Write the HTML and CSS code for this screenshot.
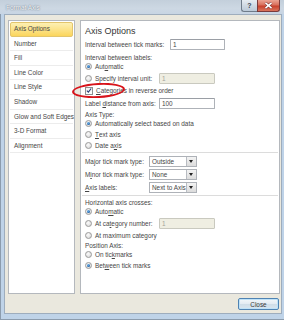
FILE: index.html
```html
<!DOCTYPE html>
<html>
<head>
  <meta charset="UTF-8">
  <title>Format Axis</title>
  <link rel="stylesheet" href="styles.css">
</head>
<body>
  <div class="window">
    <div class="titlebar">
      <span class="title">Format Axis</span>
      <div class="caption-btns">
        <span class="cap-btn help">?</span>
        <span class="cap-btn close">
          <svg width="9" height="7" viewBox="0 0 9 7">
            <path d="M1.5 0.8 L7.5 6.2 M7.5 0.8 L1.5 6.2" stroke="#6b2a2a" stroke-width="2.6"/>
            <path d="M1.5 0.8 L7.5 6.2 M7.5 0.8 L1.5 6.2" stroke="#fff" stroke-width="1.6"/>
          </svg>
        </span>
      </div>
    </div>

    <div class="client">
      <div class="panes">
        <!-- Category list -->
        <ul class="nav">
          <li class="selected">Axis Options</li>
          <li>Number</li>
          <li>Fill</li>
          <li>Line Color</li>
          <li>Line Style</li>
          <li>Shadow</li>
          <li>Glow and Soft Edges</li>
          <li>3-D Format</li>
          <li>Alignment</li>
        </ul>

        <!-- Axis options page -->
        <div class="options">
          <div class="heading">Axis Options</div>

          <div class="row field">
            <span class="lbl lbl-wide">Interval between tick marks:</span>
            <span class="textbox tb-short">1</span>
          </div>
          <div class="row group-label spaced">Interval between labels:</div>
          <div class="row"><span class="radio checked"></span>Aut<u>o</u>matic</div>
          <div class="row field">
            <span class="radio"></span>
            <span class="lbl lbl-radio">Specify interval unit:</span>
            <span class="textbox disabled">1</span>
          </div>
          <div class="row check-row">
            <span class="checkbox">
              <svg width="7" height="7" viewBox="0 0 7 7">
                <path d="M1 3.6 L2.8 5.4 L6 1.2" fill="none" stroke="#2c3f78" stroke-width="1.3"/>
              </svg>
            </span>
            <u>C</u>ategories in reverse order
            <span class="mark"></span>
          </div>
          <div class="row field">
            <span class="lbl lbl-mid">Label <u>d</u>istance from axis:</span>
            <span class="textbox">100</span>
          </div>

          <div class="row group-label">Axis Type:</div>
          <div class="row"><span class="radio checked"></span>Automatically select based on data</div>
          <div class="row"><span class="radio"></span><u>T</u>ext axis</div>
          <div class="row"><span class="radio"></span>Date a<u>x</u>is</div>

          <div class="sep"></div>

          <div class="row field">
            <span class="lbl lbl-select">Major tick mark type:</span>
            <span class="dropdown">Outside<span class="arrow"></span></span>
          </div>
          <div class="row field">
            <span class="lbl lbl-select">M<u>i</u>nor tick mark type:</span>
            <span class="dropdown">None<span class="arrow"></span></span>
          </div>
          <div class="row field">
            <span class="lbl lbl-select"><u>A</u>xis labels:</span>
            <span class="dropdown">Next to Axis<span class="arrow"></span></span>
          </div>

          <div class="sep"></div>

          <div class="row group-label">Horizontal axis crosses:</div>
          <div class="row"><span class="radio checked"></span>Auto<u>m</u>atic</div>
          <div class="row field">
            <span class="radio"></span>
            <span class="lbl lbl-radio">At ca<u>t</u>egory number:</span>
            <span class="textbox disabled">1</span>
          </div>
          <div class="row"><span class="radio"></span>At maximum category</div>

          <div class="row group-label">Position Axis:</div>
          <div class="row"><span class="radio"></span>On tic<u>k</u> marks</div>
          <div class="row"><span class="radio checked"></span>Bet<u>w</u>een tick marks</div>
        </div>
      </div>

      <div class="footer">
        <button class="btn">Close</button>
      </div>
    </div>
  </div>
</body>
</html>
```

FILE: styles.css
```css
:root {
  --frame: #bfd3e8;
  --client-bg: #eae8de;
  --text: #464646;
  --box-border: #aeb2b8;
  --panel-border: #b4b8bd;
}

body {
  margin: 0;
  width: 284px;
  height: 320px;
  overflow: hidden;
  font-family: 'Liberation Sans', Arial, sans-serif;
  font-size: 6.4px;
  color: var(--text);
  background-color: var(--frame);
}

u {
  text-decoration-thickness: 0.5px;
  text-underline-offset: 1px;
}

.window {
  height: 320px;
  box-sizing: border-box;
  box-shadow: inset 1px 0 0 #8c9cad, inset 0 -1px 0 #8c9cad;
}

/* Title bar */
.titlebar {
  height: 14px;
  display: flex;
  justify-content: space-between;
  align-items: flex-start;
  padding: 0 4px 0 6px;
  background: linear-gradient(180deg, #c3cfdb 0%, #cdd8e3 60%, #c7d5e4 100%);
}

.title {
  line-height: 15px;
  color: #f7f9fb;
  text-shadow: 0 0 1px #5e6b79, 0 0 2px #8f9cab;
}

.caption-btns {
  display: flex;
  height: 12px;
}

.cap-btn {
  display: flex;
  align-items: center;
  justify-content: center;
  box-sizing: border-box;
  height: 12px;
  border: 1px solid #6f7c8a;
  border-top: none;
}

.cap-btn.help {
  width: 16px;
  border-right: none;
  border-radius: 0 0 0 3px;
  background: linear-gradient(180deg, #e6ecf2 0%, #cfd9e3 50%, #bccad8 100%);
  color: #3b4653;
  font-weight: bold;
  font-size: 7px;
}

.cap-btn.close {
  width: 23px;
  border-radius: 0 0 3px 0;
  border-color: #7a3b3b;
  background: linear-gradient(180deg, #eba493 0%, #d9705c 45%, #c8412c 55%, #d9745c 100%);
}

/* Client area */
.client {
  width: 278px;
  height: 300px;
  box-sizing: border-box;
  margin-left: 4px;
  padding: 5px 1px 3px 3px;
  background-color: var(--client-bg);
  border: 1px solid #9eadbd;
}

.panes {
  display: flex;
  gap: 5px;
  height: 274px;
}

/* Left category list */
.nav {
  list-style: none;
  margin: 0;
  padding: 1px 1px 0 1px;
  width: 67px;
  box-sizing: border-box;
  background: #fff;
  border: 1px solid var(--panel-border);
}

.nav li {
  height: 14.6px;
  line-height: 14.6px;
  box-sizing: border-box;
  padding-left: 4px;
  border-bottom: 1px solid #ececec;
  white-space: nowrap;
}

.nav li.selected {
  padding-left: 3px;
  border: 1px solid #e3c56c;
  border-radius: 2px;
  background: linear-gradient(180deg, #fdf0b3 0%, #fce38a 50%, #fbd55c 100%);
  line-height: 12.6px;
}

/* Right options page */
.options {
  flex: 1;
  padding-top: 5px;
  background: #fff;
  border: 1px solid var(--panel-border);
}

.heading {
  height: 11px;
  line-height: 11px;
  padding-left: 4px;
  font-size: 9px;
  color: #353535;
}

.row {
  display: flex;
  align-items: center;
  height: 10px;
  margin-top: 1px;
  padding-left: 4px;
  white-space: nowrap;
}

.row.field {
  height: 12px;
}

.row.check-row {
  position: relative;
  height: 11px;
}

.row.group-label {
  height: 8px;
}

.row.group-label.spaced {
  margin-top: 3px;
}

.group-label + .row {
  margin-top: 0;
}

.lbl {
  flex: none;
}

.lbl-wide { width: 85px; }
.lbl-mid { width: 74px; }
.lbl-radio { width: 64px; }
.lbl-select { width: 64px; }

.sep {
  height: 1px;
  margin: 2px 1px;
  background: #dcdcdc;
}

/* Controls */
.radio {
  flex: none;
  width: 7px;
  height: 7px;
  margin-right: 3px;
  box-sizing: border-box;
  border: 1px solid #9a9a9a;
  border-radius: 50%;
  background: radial-gradient(circle at 40% 35%, #fbfbfb 0%, #e4e4e4 60%, #cfcfcf 100%);
  position: relative;
}

.radio.checked::after {
  content: "";
  position: absolute;
  left: 1px;
  top: 1px;
  width: 3px;
  height: 3px;
  border-radius: 50%;
  background: radial-gradient(circle at 40% 35%, #6fb6ec 0%, #1c5fa8 70%, #123f76 100%);
}

.checkbox {
  flex: none;
  display: flex;
  align-items: center;
  justify-content: center;
  width: 8px;
  height: 8px;
  margin-right: 3px;
  box-sizing: border-box;
  border: 1px solid #8e8f8f;
  background: linear-gradient(180deg, #f0f0f0, #fff);
}

/* Red hand-drawn circle around the checkbox */
.mark {
  position: absolute;
  left: -9px;
  top: -2px;
  width: 53px;
  height: 15px;
  box-sizing: border-box;
  border: 2px solid #d8141b;
  border-radius: 50%;
  transform: rotate(-3deg);
}

.textbox {
  flex: none;
  width: 56px;
  height: 11px;
  line-height: 9px;
  box-sizing: border-box;
  padding-left: 2px;
  border: 1px solid var(--box-border);
  border-top-color: #9a9ea5;
  border-radius: 1px;
  background: #fff;
}

.textbox.tb-short {
  width: 55px;
}

.textbox.disabled {
  background: #efeee2;
  border-color: #c9c9bf;
  color: #a3a39a;
}

.dropdown {
  flex: none;
  display: flex;
  align-items: center;
  justify-content: space-between;
  width: 48px;
  height: 11px;
  box-sizing: border-box;
  padding-left: 2px;
  border: 1px solid var(--box-border);
  background: #fff;
}

.dropdown .arrow {
  width: 10px;
  height: 9px;
  box-sizing: border-box;
  border-left: 1px solid #b8bcc2;
  background: linear-gradient(180deg, #f3f3f3 0%, #dcdcdc 100%);
  position: relative;
}

.dropdown .arrow::after {
  content: "";
  position: absolute;
  left: 2px;
  top: 3px;
  border-left: 2.5px solid transparent;
  border-right: 2.5px solid transparent;
  border-top: 3px solid #222;
}

/* Footer with Close button */
.footer {
  display: flex;
  justify-content: flex-end;
  margin-top: 4px;
  padding-right: 1px;
}

.btn {
  width: 41px;
  height: 12px;
  padding: 0;
  font-family: inherit;
  font-size: 6.4px;
  color: #3a3a3a;
  border: 1px solid #4f83b3;
  border-radius: 2px;
  background: linear-gradient(180deg, #f3f7fa 0%, #e2ebf2 50%, #cfdde8 51%, #d9e6f0 100%);
  box-shadow: inset 0 0 0 1px #bfe2f8;
}
```
